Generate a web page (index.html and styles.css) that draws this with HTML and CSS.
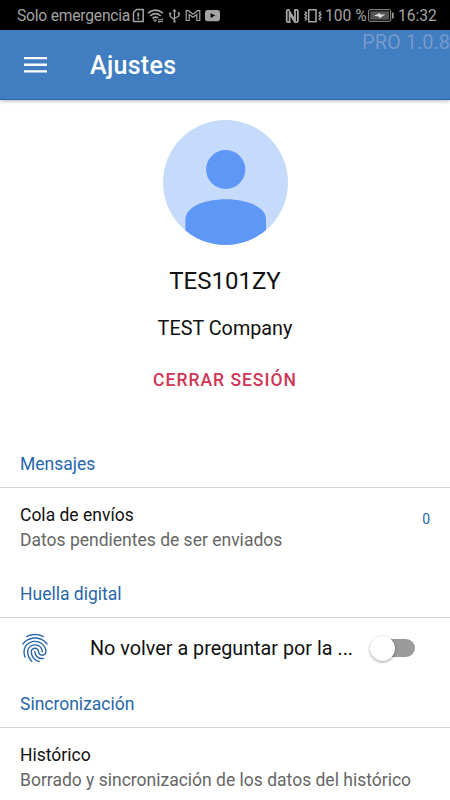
FILE: index.html
```
<!DOCTYPE html>
<html lang="es">
<head>
	<meta charset="UTF-8">
	<meta name="viewport" content="width=device-width">
	<title>Ajustes</title>
	<link rel="stylesheet" href="styles.css">
</head>
<body>
	<div class="statusbar">
		<span class="carrier">Solo emergencia</span>
		<svg class="notifications" width="90" height="16" viewBox="0 0 90 16" fill="none" stroke="#a3a3a3" stroke-width="1.3">
			<!-- sim -->
			<path d="M4.5 1.5h6.7v12H1.5v-9z" stroke-width="1.5"/>
			<path d="M6.3 4.5v4.2M6.3 9.7v1.7" stroke-width="1.8"/>
			<!-- wifi -->
			<path d="M16 5.1q7.5-6 15 0M18.2 7.8q5.3-4.2 10.6 0M20.500 10.300q3-2.300 5.500-.4" stroke-width="1.7"/>
			<path d="M21.5 12h3L23 13.700zM26 11.700h5M29.500 10.200l1.700 1.500M31 13.500h-5M27.500 14.700L26 13.500" stroke-width="1"/>
			<!-- usb -->
			<path d="M42.5 2v12M38.2 5.5v3l4.3 3M46.8 5v3l-4.3 2.5"/>
			<path d="M42.5.7l2 2.8h-4zM37.2 4.5h2v2h-2zM45.8 4.2h2v2h-2zM41.5 12.5h2v2h-2z" fill="#a3a3a3" stroke="none"/>
			<!-- mail -->
			<path d="M54.2 12.500V2.700h2.300L61 6.200l4.500-3.500h2.300v9.800h-3v-6L61 9.300l-3.800-2.800v6z" stroke-width="1.2"/>
			<!-- video -->
			<rect x="73" y="2" width="15" height="11.2" rx="2.7" fill="#a3a3a3" stroke="none"/>
			<path d="M78.6 5.200l4.500 2.400-4.500 2.400z" fill="#000" stroke="none"/>
		</svg>
		<svg class="device" width="40" height="16" viewBox="0 0 40 16" fill="none" stroke="#a3a3a3">
			<!-- nfc -->
			<path d="M4.6 1.8H3Q1.7 1.8 1.7 3v10q0 1.2 1.3 1.2h1.6V3.6l5.4 8.8V1.8h1.6q1.3 0 1.3 1.2v10q0 1.2-1.3 1.2H10L4.6 5.5" stroke-width="1.8"/>
			<!-- vibrate -->
			<path d="M23.7 1.8H31v12h-7.300z" stroke-width="1.6"/>
			<path d="M20 3.5L21.5 5 20 6.5 21.5 8 20 9.5l1.5 1.5-1.5 1.5M35.8 3.5L34.3 5l1.5 1.5L34.3 8l1.5 1.5-1.5 1.5 1.5 1.5" stroke-width="1.5"/>
		</svg>
		<span class="percent">100 %</span>
		<svg class="battery" width="28" height="14" viewBox="0 0 28 14">
			<rect x=".7" y=".7" width="22" height="11.6" rx="1" fill="#000" stroke="#999" stroke-width="1"/>
			<rect x="2.3" y="2.3" width="18.8" height="8.4" fill="#555"/>
			<path d="M6 6.7L11.800 4l.7 1.600h4.800l-5.800 3.600-.7-1.800z" fill="#ddd"/>
			<rect x="24" y="3.5" width="1.7" height="6" fill="#999"/>
		</svg>
		<span class="clock">16:32</span>
	</div>

	<header class="toolbar">
		<svg class="menu" width="24" height="18" viewBox="0 0 24 18" fill="#fff">
			<path d="M0 1h23v2.3H0zM0 7.6h23v2.3H0zM0 14.2h23v2.3H0z"/>
		</svg>
		<h1 class="title">Ajustes</h1>
		<span class="version">PRO 1.0.8</span>
	</header>

	<section class="profile">
		<svg class="avatar" width="126" height="126" viewBox="0 0 126 126">
			<clipPath id="circle"><circle cx="63.5" cy="62.5" r="62.5"/></clipPath>
			<g clip-path="url(#circle)">
				<path fill="#c6dafb" d="M0 0h126v126H0z"/>
				<circle cx="63.7" cy="49.5" r="19.6" fill="#5e97f6"/>
				<path fill="#5e97f6" d="M23.4 126V99.5c0-12 18-20.2 40.3-20.2s40.3 8.2 40.3 20.2V126z"/>
			</g>
		</svg>
		<div class="user">TES101ZY</div>
		<div class="company">TEST Company</div>
		<button class="logout">CERRAR SESIÓN</button>
	</section>

	<section class="group">
		<h2 class="group-title">Mensajes</h2>
		<div class="item">
			<div>
				<div class="name">Cola de envíos</div>
				<div class="desc">Datos pendientes de ser enviados</div>
			</div>
			<span class="count">0</span>
		</div>
	</section>

	<section class="group">
		<h2 class="group-title">Huella digital</h2>
		<div class="item-switch">
			<svg class="fingerprint" width="34" height="34" viewBox="0 0 24 24" fill="#2866aa">
				<path d="M17.81 4.47c-.08 0-.16-.02-.23-.06C15.66 3.42 14 3 12.01 3c-1.98 0-3.86.47-5.57 1.41-.24.13-.54.04-.68-.2-.13-.24-.04-.55.2-.68C7.82 2.52 9.86 2 12.01 2c2.13 0 3.99.47 6.03 1.52.25.13.34.43.21.67-.09.18-.26.28-.44.28zM3.5 9.72c-.1 0-.2-.03-.29-.09-.23-.16-.28-.47-.12-.7.99-1.4 2.25-2.5 3.75-3.27C9.98 4.04 14 4.03 17.15 5.65c1.5.77 2.76 1.86 3.75 3.25.16.22.11.54-.12.7-.23.16-.54.11-.7-.12-.9-1.26-2.04-2.25-3.39-2.94-2.87-1.47-6.54-1.47-9.4.01-1.36.7-2.5 1.7-3.4 2.96-.08.14-.23.21-.39.21zm6.25 12.07c-.13 0-.26-.05-.35-.15-.87-.87-1.34-1.43-2.01-2.64-.69-1.23-1.05-2.73-1.05-4.34 0-2.97 2.54-5.39 5.66-5.39s5.66 2.42 5.66 5.39c0 .28-.22.5-.5.5s-.5-.22-.5-.5c0-2.42-2.09-4.39-4.66-4.39-2.57 0-4.66 1.97-4.66 4.39 0 1.44.32 2.77.93 3.85.64 1.15 1.08 1.64 1.85 2.42.19.2.19.51 0 .71-.11.1-.24.15-.37.15zm7.17-1.85c-1.19 0-2.24-.3-3.1-.89-1.49-1.01-2.38-2.65-2.38-4.39 0-.28.22-.5.5-.5s.5.22.5.5c0 1.41.72 2.74 1.94 3.56.71.48 1.54.71 2.54.71.24 0 .64-.03 1.04-.1.27-.05.53.13.58.41.05.27-.13.53-.41.58-.57.11-1.07.12-1.21.12zM14.91 22c-.04 0-.09-.01-.13-.02-1.59-.44-2.63-1.03-3.72-2.1-1.4-1.39-2.17-3.24-2.17-5.22 0-1.62 1.38-2.94 3.08-2.94 1.7 0 3.08 1.32 3.08 2.94 0 1.07.93 1.94 2.08 1.94s2.08-.87 2.08-1.94c0-3.77-3.25-6.83-7.25-6.83-2.84 0-5.44 1.58-6.61 4.03-.39.81-.59 1.76-.59 2.8 0 .78.07 2.01.67 3.61.1.26-.03.55-.29.64-.26.1-.55-.04-.64-.29-.49-1.31-.73-2.61-.73-3.96 0-1.2.23-2.29.68-3.24 1.33-2.79 4.28-4.6 7.51-4.6 4.55 0 8.25 3.51 8.25 7.83 0 1.62-1.38 2.94-3.08 2.94s-3.08-1.32-3.08-2.94c0-1.07-.93-1.94-2.08-1.94s-2.08.87-2.08 1.94c0 1.71.66 3.31 1.87 4.51.95.94 1.86 1.46 3.27 1.85.27.07.42.35.35.61-.05.23-.26.38-.47.38z"/>
			</svg>
			<span class="ask">No volver a preguntar por la ...</span>
			<span class="switch"><span class="knob"></span></span>
		</div>
	</section>

	<section class="group">
		<h2 class="group-title">Sincronización</h2>
		<div class="item">
			<div>
				<div class="name">Histórico</div>
				<div class="desc">Borrado y sincronización de los datos del histórico</div>
			</div>
		</div>
	</section>
</body>
</html>
```
FILE: styles.css
```
* { box-sizing: border-box; }

body {
	margin: 0;
	height: 800px;
	overflow: hidden;
	background: #fff;
	color: #111;
	font-family: Roboto, sans-serif;
	white-space: nowrap;
}

svg { display: block; flex: none; }
h1, h2 { margin: 0; }

.statusbar {
	display: flex;
	align-items: center;
	height: 30px;
	padding: 1px 0 0 17px;
	background: #000;
	color: #a3a3a3;
	font-size: 15.6px;
	line-height: 30px;
}
.carrier { width: 115px; letter-spacing: -.2px; }
.device { margin-left: 63px; }
.percent { width: 42px; }
.battery { margin-left: 1px; }
.clock { margin-left: 2px; }

.toolbar {
	position: relative;
	display: flex;
	align-items: center;
	height: 70px;
	padding: 1px 0 0 24px;
	background: #417dc1;
	border-bottom: 1px solid #2968a8;
	box-shadow: 0 1px 4px rgba(0, 0, 0, .3);
}
.title {
	margin: 1px 0 0 42px;
	color: #fff;
	font-size: 25px;
	font-weight: 500;
	letter-spacing: .3px;
}
/* build label floats over the toolbar corner */
.version {
	position: absolute;
	top: 0;
	right: 0;
	color: #759aca;
	font-size: 20px;
	line-height: 24px;
}

.profile {
	display: flex;
	flex-direction: column;
	align-items: center;
	height: 340px;
	padding-top: 20px;
}
.user { margin-top: 19px; font-size: 24px; line-height: 32px; }
.company { margin-top: 20px; font-size: 19.8px; line-height: 24px; }
.logout {
	margin-top: 27px;
	padding: 0;
	border: 0;
	background: none;
	color: #cf3554;
	font: 500 17.5px/24px Roboto, sans-serif;
	letter-spacing: 1px;
}

.group-title {
	height: 48px;
	padding-left: 20px;
	border-bottom: 1px solid #d5d5d5;
	color: #2866aa;
	font-size: 17.5px;
	font-weight: 400;
	line-height: 48px;
}
.item {
	display: flex;
	justify-content: space-between;
	height: 82px;
	padding: 15px 20px 0;
}
.name { font-size: 17.5px; line-height: 25px; }
.desc { color: #666; font-size: 17.5px; line-height: 25px; }
.count { margin-top: 3px; color: #2866aa; font-size: 14px; line-height: 26px; }

.item-switch {
	display: flex;
	align-items: center;
	height: 62px;
	padding: 0 35px 2px 18px;
}
.ask { margin-left: 38px; font-size: 19.8px; }
.switch {
	display: flex;
	align-items: center;
	width: 43px;
	height: 18px;
	margin-left: auto;
	border-radius: 9px;
	background: #9b9b9b;
}
.knob {
	width: 25px;
	height: 25px;
	margin-left: -2px;
	flex: none;
	border-radius: 50%;
	background: #fff;
	box-shadow: 0 1px 3px rgba(0, 0, 0, .4);
}
```
